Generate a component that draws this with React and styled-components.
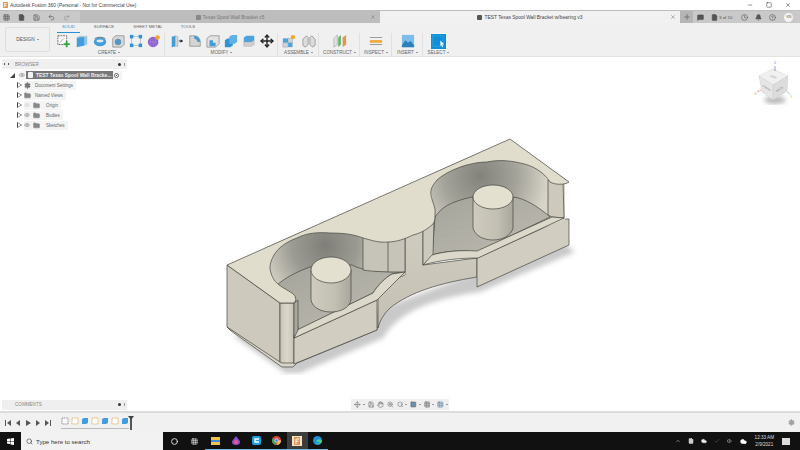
import styled, { createGlobalStyle } from "styled-components"
import {
  Bell, Check, ChevronUp, Circle, Clock, Cloud, Eye, File, Folder, Grid3x3, HelpCircle, Hand, MessageSquare,
  Minus, Move, Plus, Redo2, Save, Search, Settings, Square, Undo2, Volume1, X, ZoomIn,
} from "lucide-react"

const GlobalStyle = createGlobalStyle`
  html, body { margin: 0; padding: 0; background: #fff; }
  body { font-family: "Liberation Sans", Arial, sans-serif; }
`

const Page = styled.div`
  width: 800px;
  height: 450px;
  display: flex;
  flex-direction: column;
  overflow: hidden;
  background: #fff;
  color: #666;
`

const TitleBar = styled.div`
  height: 10px;
  display: flex;
  align-items: center;
  padding: 0 4px 0 3px;
  background: #fff;
`

const AppMark = styled.span`
  width: 5px;
  height: 6px;
  margin-right: 2px;
  background: #e8924a;
  color: #fff;
  font-size: 5px;
  font-weight: 700;
  line-height: 6px;
  text-align: center;
`

const TitleText = styled.span`
  font-size: 4.9px;
  color: #444;
  white-space: nowrap;
`

const WindowButtons = styled.div`
  margin-left: auto;
  display: flex;
  gap: 13px;
  padding-right: 5px;
  color: #333;
`

const TabBar = styled.div`
  height: 13px;
  display: flex;
  background: #c9c9c9;
  border-top: 1px solid #bdbdbd;
  box-sizing: border-box;
`

const QuickTools = styled.div`
  width: 80px;
  display: flex;
  align-items: center;
  gap: 8px;
  padding-left: 3px;
  box-sizing: border-box;
  color: #555;
`

const DocTab = styled.div`
  width: 300px;
  position: relative;
  display: flex;
  align-items: center;
  justify-content: center;
  gap: 2px;
  font-size: 4.9px;
  white-space: nowrap;
  background: ${(p) => (p.$active ? "#f1f1f1" : "#bdbdbd")};
  color: ${(p) => (p.$active ? "#444" : "#777")};
`

const TabCube = styled.span`
  width: 5px;
  height: 5px;
  border-radius: 1px;
  background: ${(p) => (p.$active ? "#555" : "#888")};
`

const TabClose = styled.span`
  position: absolute;
  right: 4px;
  top: 3px;
  display: flex;
  color: #777;
`

const NewTab = styled.div`
  width: 13px;
  display: flex;
  align-items: center;
  justify-content: center;
  background: #b5b5b5;
  color: #777;
`

const AccountTools = styled.div`
  flex: 1;
  display: flex;
  align-items: center;
  padding-left: 4px;
  color: #555;
`

const JobCount = styled.span`
  font-size: 4.4px;
  margin: 0 9px 0 1px;
  color: #555;
  white-space: nowrap;
`

const AccountIcon = styled.span`
  display: flex;
  margin-right: ${(p) => p.$gap}px;
`

const Avatar = styled.span`
  width: 9px;
  height: 9px;
  border-radius: 50%;
  background: #f4f4f4;
  font-size: 3.6px;
  line-height: 9px;
  text-align: center;
  margin-left: 8px;
`

const Toolbar = styled.div`
  height: 34px;
  box-sizing: border-box;
  display: flex;
  padding: 0 0 0 5px;
  background: #f0f0f0;
  border-bottom: 1px solid #e2e2e2;
`

const DesignButton = styled.div`
  width: 45px;
  height: 25px;
  box-sizing: border-box;
  margin: 4px 4px 0 0;
  display: flex;
  align-items: center;
  justify-content: center;
  border: 1px solid #dedede;
  border-radius: 2px;
  font-size: 4.8px;
  color: #555;
`

const Caret = styled.span`
  display: inline-block;
  margin-left: 2px;
  vertical-align: middle;
  border-left: 1.2px solid transparent;
  border-right: 1.2px solid transparent;
  border-top: 1.6px solid #444;
`

const ToolColumn = styled.div`
  display: flex;
  flex-direction: column;
`

const TabRow = styled.div`
  height: 10px;
  display: grid;
  grid-template-columns: 3px 23px 48px 40px 40px;
`

const RibbonTab = styled.div`
  grid-column: ${(p) => p.$col};
  font-size: 4.3px;
  line-height: 8px;
  text-align: center;
  white-space: nowrap;
  color: ${(p) => (p.$active ? "#2a8fd0" : "#666")};
  border-bottom: ${(p) => (p.$active ? "1px solid #2a8fd0" : "none")};
  height: 8.5px;
`

const Groups = styled.div`
  display: flex;
`

const Group = styled.div`
  width: ${(p) => p.$w}px;
  height: 23px;
  margin-right: 1px;
  display: flex;
  flex-direction: column;
  align-items: center;
  border-right: ${(p) => (p.$last ? "none" : "1px solid #e0e0e0")};
  box-sizing: content-box;
`

const GroupIcons = styled.div`
  height: 16px;
  display: flex;
  align-items: center;
  justify-content: center;
  gap: ${(p) => p.$gap || 4}px;
  svg {
    width: ${(p) => p.$size || 14}px;
    height: ${(p) => p.$size || 14}px;
  }
`

const GroupLabel = styled.div`
  font-size: 4.6px;
  line-height: 7px;
  white-space: nowrap;
  color: #666;
`

const Canvas = styled.div`
  position: relative;
  flex: 1;
  min-height: 0;
  display: flex;
  flex-direction: column;
  padding: 2px 0 1px 2px;
  box-sizing: border-box;
  background: #fff;
`

const PanelBar = styled.div`
  width: 125px;
  height: 10px;
  box-sizing: border-box;
  display: flex;
  align-items: center;
  padding: 0 2px;
  background: #efefef;
  font-size: 4.6px;
  color: #888;
`

const Grip = styled.span`
  width: 3px;
  height: 2px;
  margin-right: 6px;
  border-left: 1px solid #555;
  border-right: 1px solid #555;
  visibility: ${(p) => (p.$hidden ? "hidden" : "visible")};
`

const PanelDot = styled.span`
  width: 3px;
  height: 3px;
  margin-left: auto;
  border-radius: 50%;
  background: #333;
`

const PanelPipe = styled.span`
  width: 1px;
  height: 3px;
  margin: 0 0 0 3px;
  background: #999;
`

const Tree = styled.div`
  margin-top: 1px;
  display: flex;
  flex-direction: column;
  z-index: 1;
`

const TreeRow = styled.div`
  height: 10px;
  display: flex;
  align-items: center;
  padding-left: ${(p) => p.$indent}px;
  color: #777;
`

const RowBody = styled.div`
  height: 9px;
  display: flex;
  align-items: center;
  gap: ${(p) => p.$gap || 3}px;
  padding-right: 3px;
  margin-left: 3px;
  background: #f4f4f4;
`

const Arrow = styled.span`
  width: 0;
  height: 0;
  border-left: 4px solid transparent;
  border-top: 2.5px solid transparent;
  border-bottom: 2.5px solid transparent;
  position: relative;
  &::before {
    content: "";
    position: absolute;
    left: -4px;
    top: -3.5px;
    border-left: 5px solid #444;
    border-top: 3.5px solid transparent;
    border-bottom: 3.5px solid transparent;
  }
  &::after {
    content: "";
    position: absolute;
    left: -3.4px;
    top: -2.2px;
    border-left: 3px solid #fff;
    border-top: 2.2px solid transparent;
    border-bottom: 2.2px solid transparent;
  }
`

const RowText = styled.span`
  font-size: 4.5px;
  white-space: nowrap;
  color: #666;
  margin-left: ${(p) => p.$left || 0}px;
`

const RootLabel = styled.span`
  width: 87px;
  height: 8px;
  display: flex;
  align-items: center;
  gap: 3px;
  padding-left: 2px;
  box-sizing: border-box;
  background: #777;
  color: #f2f2f2;
  font-size: 4.9px;
  font-weight: 700;
  white-space: nowrap;
`

const DocChip = styled.span`
  width: 5px;
  height: 6px;
  background: #f2f2f2;
  border-radius: 1px;
`

const RootCorner = styled.span`
  width: 0;
  height: 0;
  margin-right: 1px;
  border-bottom: 5px solid #444;
  border-left: 5px solid transparent;
`

const RadioMark = styled.span`
  width: 5px;
  height: 5px;
  border: 1px solid #666;
  border-radius: 50%;
  box-sizing: border-box;
  background: radial-gradient(circle, #444 40%, #fff 45%);
`

const BottomRow = styled.div`
  margin-top: auto;
  display: flex;
  align-items: center;
  gap: 224px;
`

const NavBar = styled.div`
  width: 98px;
  height: 11px;
  box-sizing: border-box;
  display: flex;
  align-items: center;
  gap: 3px;
  padding: 0 1px 0 3px;
  background: #efefef;
  color: #666;
`

const NavCaret = styled(Caret)`
  margin-left: -1px;
`

const ModelDrawing = styled.svg`
  position: absolute;
  left: 220px;
  top: 73px;
`

const CubeDrawing = styled.svg`
  position: absolute;
  right: 0;
  top: 2px;
`

const Timeline = styled.div`
  height: 21px;
  box-sizing: border-box;
  display: flex;
  align-items: center;
  padding: 0 5px;
  background: #f1f1f1;
  border-top: 2px solid #dcdcdc;
  color: #555;
`

const Transport = styled.div`
  display: flex;
  align-items: center;
  gap: 4px;
  width: 56px;
`

const Steps = styled.div`
  display: flex;
  align-items: center;
  gap: 2px;
  padding-bottom: 3px;
  border-bottom: 1px solid #bbb;
`

const Playhead = styled.span`
  width: 2px;
  height: 14px;
  margin-left: 1px;
  background: #555;
  position: relative;
  &::before {
    content: "";
    position: absolute;
    left: -2px;
    top: 0;
    border-left: 3px solid transparent;
    border-right: 3px solid transparent;
    border-top: 4px solid #444;
  }
`

const TimelineGear = styled.span`
  margin-left: auto;
  display: flex;
  color: #999;
`

const Taskbar = styled.div`
  height: 18px;
  display: flex;
  align-items: center;
  background: #111;
  color: #eee;
`

const StartButton = styled.div`
  width: 21px;
  display: flex;
  justify-content: center;
`

const SearchBox = styled.div`
  width: 142px;
  height: 18px;
  box-sizing: border-box;
  display: flex;
  align-items: center;
  gap: 3px;
  padding-left: 5px;
  margin-right: 1px;
  background: #f2f2f2;
  color: #333;
  font-size: 6.1px;
`

const TaskItem = styled.div`
  width: 20.5px;
  height: 18px;
  box-sizing: border-box;
  display: flex;
  align-items: center;
  justify-content: center;
  background: ${(p) => (p.$current ? "#3d3d3d" : "transparent")};
  border-bottom: ${(p) => (p.$open ? "1px solid #6cb8e8" : "none")};
`

const Tray = styled.div`
  margin-left: auto;
  display: flex;
  align-items: center;
  gap: 7px;
  padding-right: 10px;
  color: #ccc;
`

const TrayClock = styled.div`
  font-size: 4.6px;
  line-height: 7px;
  text-align: center;
  color: #ddd;
  margin-left: 1px;
`

const Notice = styled.span`
  width: 8px;
  height: 7px;
  margin-left: 1px;
  background: #ddd;
`

/* ribbon icons */
const SketchIcon = () => (
  <svg viewBox="0 0 16 16">
    <rect x="1" y="2" width="10" height="10" fill="#fff" stroke="#555" strokeWidth="1" strokeDasharray="2 1" />
    <path d="M3 10 L8 5" stroke="#888" strokeWidth=".8" />
    <path d="M11 8v7M7.5 11.5h7" stroke="#2ca53c" strokeWidth="2" />
  </svg>
)
const BoxIcon = () => (
  <svg viewBox="0 0 16 16">
    <path d="M2 4l9-1v10l-9 2z" fill="#3f9edb" />
    <path d="M11 3l3 -1v10l-3 1z" fill="#8dc6ea" />
    <path d="M2 4l3-2h9l-3 1z" fill="#b9c7d0" />
  </svg>
)
const RevolveIcon = () => (
  <svg viewBox="0 0 16 16">
    <ellipse cx="8" cy="9" rx="7" ry="5" fill="#3f9edb" />
    <ellipse cx="8" cy="8" rx="4" ry="1.6" fill="#e8e8e8" />
    <path d="M1.5 6C3 3 13 3 14.5 6" fill="none" stroke="#555" strokeWidth=".8" />
  </svg>
)
const HoleIcon = () => (
  <svg viewBox="0 0 16 16">
    <path d="M2 5l3-3h10v10l-3 3H2z" fill="#d8d8d8" stroke="#777" strokeWidth=".7" />
    <circle cx="8" cy="9" r="3.4" fill="#4a9bd0" stroke="#777" strokeWidth=".5" />
  </svg>
)
const NodesIcon = () => (
  <svg viewBox="0 0 16 16">
    <rect x="3" y="3" width="10" height="10" fill="none" stroke="#999" strokeWidth=".6" />
    <rect x="1" y="1" width="4" height="4" fill="#2f93d6" />
    <rect x="11" y="1" width="4" height="4" fill="#2f93d6" />
    <rect x="1" y="11" width="4" height="4" fill="#2f93d6" />
    <rect x="11" y="11" width="4" height="4" fill="#2f93d6" />
  </svg>
)
const FormIcon = () => (
  <svg viewBox="0 0 16 16">
    <circle cx="7" cy="9" r="6" fill="#8a5fd0" />
    <path d="M2 9h10M7 3v12M4 4v10M10 4v10" stroke="#b79ae6" strokeWidth=".5" />
    <circle cx="12" cy="4" r="2.6" fill="#f5a623" />
  </svg>
)
const PressIcon = () => (
  <svg viewBox="0 0 16 16">
    <path d="M2 3l4-1v12l-4 1z" fill="#3f9edb" />
    <path d="M6 2l3 1v11l-3 0z" fill="#cfd8de" stroke="#777" strokeWidth=".4" />
    <path d="M10 8h4" stroke="#222" strokeWidth="1" />
    <path d="M12 6l3 2-3 2z" fill="#222" />
  </svg>
)
const FilletIcon = () => (
  <svg viewBox="0 0 16 16">
    <path d="M2 14V2h5a7 7 0 0 1 7 7v5z" fill="#d4d4d4" stroke="#777" strokeWidth=".7" />
    <path d="M7 2a7 7 0 0 1 7 7h-3a5 5 0 0 0-4-4z" fill="#4a9bd0" />
  </svg>
)
const ChamferIcon = () => (
  <svg viewBox="0 0 16 16">
    <path d="M1 5l4-3h10v9l-4 4H1z" fill="#e2e2e2" stroke="#777" strokeWidth=".7" />
    <path d="M4 7l4 0v3h3v4H4z" fill="#3f9edb" />
  </svg>
)
const CombineIcon = () => (
  <svg viewBox="0 0 16 16">
    <path d="M1 7l3-2h6v8l-3 2H1z" fill="#2f93d6" />
    <path d="M6 3l3-2h6v8l-3 2H6z" fill="#5fb0e4" />
  </svg>
)
const StackIcon = () => (
  <svg viewBox="0 0 16 16">
    <path d="M2 4l3-2h9v5l-3 2H2z" fill="#4aa4de" />
    <path d="M2 9h9l3-2v5l-3 2H2z" fill="#cfcfcf" stroke="#999" strokeWidth=".4" />
  </svg>
)
const AssembleIcon = () => (
  <svg viewBox="0 0 16 16">
    <path d="M1 5h6v5H1z" fill="#4aa4de" />
    <path d="M7 5h5v5H7z" fill="#cfd4d8" stroke="#888" strokeWidth=".4" />
    <path d="M1 10h6v5H1z" fill="#cfd4d8" stroke="#888" strokeWidth=".4" />
    <path d="M7 10h5v5H7z" fill="#4aa4de" />
    <circle cx="12.500" cy="3.500" r="2.500" fill="#f5a623" />
  </svg>
)
const JointIcon = () => (
  <svg viewBox="0 0 16 16" fill="#dcdcdc" stroke="#777" strokeWidth=".7">
    <path d="M1 6l4-4 2 2v8l-3 3-3-2z" />
    <path d="M9 4l2-2 4 4v7l-3 2-3-3z" />
  </svg>
)
const ConstructIcon = () => (
  <svg viewBox="0 0 16 16">
    <path d="M1 5l4-4v11l-4 3z" fill="#e2e2e2" stroke="#888" strokeWidth=".5" />
    <path d="M6 4l3-3v11l-3 3z" fill="#5db56a" />
    <path d="M11 4l4-3v11l-4 3z" fill="#e8934f" />
  </svg>
)
const InspectIcon = () => (
  <svg viewBox="0 0 16 16">
    <path d="M1 4h14M1 12h14" stroke="#777" strokeWidth=".8" />
    <rect x="1" y="7" width="14" height="3" fill="#f0a63a" />
  </svg>
)
const InsertIcon = () => (
  <svg viewBox="0 0 16 16">
    <rect x="1" y="1" width="14" height="14" fill="#7dbde8" />
    <path d="M1 13l4-6 3 3 3-2 4 5v2H1z" fill="#2c7fb8" />
  </svg>
)
const SelectIcon = () => (
  <svg viewBox="0 0 18 18">
    <rect x="0" y="0" width="18" height="18" fill="#fff" />
    <rect x="1" y="1" width="16" height="16" fill="#0f8fd6" />
    <rect x="3" y="3" width="11" height="11" fill="none" stroke="#62bdf0" strokeWidth=".6" strokeDasharray="1.5 1" />
    <path d="M11 8l4 4-2 .3 1 2.4-1 .4-1-2.4-1 1.200z" fill="#fff" />
  </svg>
)

/* small timeline glyphs */
const TimelineSketch = ({ color = "#e09a3c" }) => (
  <svg width="8" height="8" viewBox="0 0 8 8">
    <rect x="1" y="1" width="6" height="6" fill="#fff" stroke={color} strokeWidth=".7" strokeDasharray="1.2 .6" />
  </svg>
)
const TimelineBody = () => (
  <svg width="8" height="8" viewBox="0 0 8 8">
    <path d="M1 2l2-1h4v5l-2 1H1z" fill="#3f9edb" />
  </svg>
)
const Transport1 = ({ d }) => (
  <svg width="6" height="6" viewBox="0 0 6 6" fill="#555">
    <path d={d} />
  </svg>
)

const ViewCube = () => (
  <CubeDrawing width="50" height="56" viewBox="750 59 50 56">
    <defs>
      <filter id="cubeShadow"><feGaussianBlur stdDeviation="2" /></filter>
    </defs>
    <ellipse cx="775" cy="100" rx="11" ry="4" fill="#bbb" filter="url(#cubeShadow)" />
    <path d="M773 69l15 7-1 15-14 9-11-8-3-16z" fill="#eee" />
    <path d="M773 69l15 7-15 9-14-9z" fill="#f0f0f0" stroke="#bbb" strokeWidth=".4" strokeDasharray="1.5 .8" />
    <path d="M759 76l14 9v15l-11-8z" fill="#e6e6e6" stroke="#bbb" strokeWidth=".4" strokeDasharray="1.5 .8" />
    <path d="M788 76l-15 9v15l14-9z" fill="#dcdcdc" stroke="#bbb" strokeWidth=".4" strokeDasharray="1.5 .8" />
    <text x="773" y="78" fontSize="2.8" fill="#888" textAnchor="middle" transform="rotate(20 773 78)">LEFT</text>
    <text x="766" y="89" fontSize="2.8" fill="#888" textAnchor="middle" transform="rotate(35 766 89)">FRONT</text>
    <text x="780" y="90" fontSize="2.8" fill="#888" textAnchor="middle" transform="rotate(-32 780 90)">BACK</text>
    <path d="M775 66v5" stroke="#8a7ae0" strokeWidth=".8" />
    <path d="M757 92l4-2" stroke="#e88a6a" strokeWidth=".8" />
    <path d="M787 92l3 2" stroke="#7ed47e" strokeWidth=".8" />
    <text x="775" y="64" fontSize="3.6" fill="#8a7ae0" textAnchor="middle">Z</text>
    <text x="755.5" y="95" fontSize="3.6" fill="#e88a6a" textAnchor="middle">X</text>
    <text x="791" y="98" fontSize="3.6" fill="#7ed47e" textAnchor="middle">Y</text>
  </CubeDrawing>
)

const Model = () => (
  <ModelDrawing width="360" height="245" viewBox="220 130 360 245">
    <defs>
      <clipPath id="bodyClip">
        <path d="M227 265L510 139L569 182V245L477 287V258L405 275L377 300L294 340L280 303Z" />
      </clipPath>
      <filter id="soft" x="-10%" y="-10%" width="120%" height="120%"><feGaussianBlur stdDeviation="2.5" /></filter>
      <radialGradient id="wallL" gradientUnits="userSpaceOnUse" cx="325" cy="246" r="60">
        <stop offset="0" stopColor="#7f7e78" />
        <stop offset=".55" stopColor="#9c9b93" />
        <stop offset="1" stopColor="#cdcbbf" />
      </radialGradient>
      <radialGradient id="wallR" gradientUnits="userSpaceOnUse" cx="480" cy="176" r="68">
        <stop offset="0" stopColor="#82817b" />
        <stop offset=".55" stopColor="#a5a49b" />
        <stop offset="1" stopColor="#d6d3c7" />
      </radialGradient>
      <linearGradient id="cyl" x1="0" x2="1" y1="0" y2="0">
        <stop offset="0" stopColor="#cfccbf" />
        <stop offset=".6" stopColor="#c2bfb3" />
        <stop offset="1" stopColor="#a9a79d" />
      </linearGradient>
      <linearGradient id="floor" x1="0" x2="1" y1="0" y2="1">
        <stop offset="0" stopColor="#a5a49b" />
        <stop offset="1" stopColor="#bebcb1" />
      </linearGradient>
      <linearGradient id="fillet" x1="0" x2="1" y1="0" y2="0">
        <stop offset="0" stopColor="#c8c5b8" />
        <stop offset=".5" stopColor="#dbd8cb" />
        <stop offset="1" stopColor="#c6c3b6" />
      </linearGradient>
      <linearGradient id="flat" x1="0" x2="0" y1="0" y2="1">
        <stop offset="0" stopColor="#d0cdc0" />
        <stop offset="1" stopColor="#c4c1b4" />
      </linearGradient>
    </defs>

    <path d="M232 335 L285 373 L300 373 L383 338 C395 318 420 300 480 292 L575 252 L560 240 L300 340 Z" fill="#c9c9c9" filter="url(#soft)" />

    <g stroke="#45453f" strokeWidth=".7" strokeLinejoin="round">
      <path d="M227 327l4 4 51 36h11l4-4 80-33 0-3-100 30z" fill="#d8d5c8" />
      <path d="M227 265L280 303V362L227 327Z" fill="#cdcabd" />
      <path d="M280 303H294V363H282L280 362Z" fill="url(#fillet)" />
      <path d="M294 338L377 300V330L294 364Z" fill="#d1cec1" />
      <path d="M405 236L423 226V265L477 258V277C440 283 410 292 390 308C384 314 380 320 378 328V299C380 290 385 283 405 275Z" fill="url(#flat)" />
      <path d="M477 258L563 219H569V245L477 287Z" fill="#d1cec1" />

      <path d="M262 228H405V275L392 274C382 280 376 288 373 293L298 330L296 303L262 285Z" fill="url(#wallL)" stroke="none" clipPath="url(#bodyClip)" />
      <path d="M277 285C285 278 296 272 310 267L352 265C362 271 384 272 405 272L392 274C385 278 378 285 373 293L298 330L296 302Z" fill="url(#floor)" />
      <path d="M363 236V270C375 272 390 272 405 272V236Z" fill="#c6c4b8" />
      <path d="M388 240V272" fill="none" />
      <path d="M405 272L378 299L377 300L294 338V335L297 330L373 293C378 285 385 278 392 274Z" fill="#dcd9cb" />
      <path d="M294 303V338L298 330V300Z" fill="#a9a79e" />

      <path d="M425 155H565V220L477 252L432 255V200Z" fill="url(#wallR)" stroke="none" clipPath="url(#bodyClip)" />
      <path d="M435 217C442 207 450 202 472 197L513 197C525 198 540 208 550 217L477 252C462 250 445 251 432 255Z" fill="url(#floor)" />
      <path d="M423 228L434 220L433 255L423 265Z" fill="#cbc9bd" />
      <path d="M548 180H563L564 218L552 217L548 215Z" fill="#cdcabd" />
      <path d="M432 255C445 251 462 250 477 251L552 217L564 218L478 258C460 258 440 260 423 265Z" fill="#dcd9cb" />

      <path d="M227 265L510 139L569 182C565 185 555 185 550 182C544 172 532 165 520 163C508 160 497 160 487 162C470 162 448 170 437 180C432 186 430 190 431 195C432 202 436 208 435 213C435 219 435 222 432 225C425 231 418 234 413 235C405 239 396 242 388 242C378 243 371 240 363 238C353 234 342 233 330 233C318 232 306 233 297 238C286 242 278 248 274 255C270 262 269 268 271 273C273 280 277 284 282 287L292 293C296 296 297 300 294 303H280Z" fill="#e1ddcd" />

      <path d="M311 270V300C314 316 348 316 351 300V270Z" fill="url(#cyl)" />
      <ellipse cx="331" cy="270" rx="20" ry="13" fill="#e4e0d0" />
      <path d="M473 197V228C477 244 509 244 513 228V197Z" fill="url(#cyl)" />
      <ellipse cx="493" cy="197" rx="20" ry="12" fill="#e4e0d0" />
    </g>
  </ModelDrawing>
)

const create = [SketchIcon, BoxIcon, RevolveIcon, HoleIcon, NodesIcon, FormIcon]
const modify = [PressIcon, FilletIcon, ChamferIcon, CombineIcon, StackIcon]

const treeItems = [
  { name: "Document Settings", eye: false, gear: true },
  { name: "Named Views", eye: false },
  { name: "Origin", eye: true, faded: true, nested: true },
  { name: "Bodies", eye: true, nested: true },
  { name: "Sketches", eye: true, nested: true },
]

const App = () => (
  <Page>
    <GlobalStyle />
    <TitleBar>
      <AppMark>F</AppMark>
      <TitleText>Autodesk Fusion 360 (Personal - Not for Commercial Use)</TitleText>
      <WindowButtons>
        <Minus size={6} />
        <Square size={6} />
        <X size={6} />
      </WindowButtons>
    </TitleBar>

    <TabBar>
      <QuickTools>
        <Grid3x3 size={7} />
        <File size={7} fill="#555" />
        <Save size={7} />
        <Undo2 size={7} />
        <Redo2 size={7} opacity={0.5} />
      </QuickTools>
      <DocTab>
        <TabCube />
        Texas Spool Wall Bracket v5
        <TabClose><X size={6} /></TabClose>
      </DocTab>
      <DocTab $active>
        <TabCube $active />
        TEST Texas Spool Wall Bracket w/bearing v3
        <TabClose><X size={6} /></TabClose>
      </DocTab>
      <NewTab><Plus size={8} strokeWidth={3} /></NewTab>
      <AccountTools>
        <AccountIcon $gap={7}><MessageSquare size={7} fill="#555" /></AccountIcon>
        <AccountIcon $gap={0}><File size={7} fill="#555" /></AccountIcon>
        <JobCount>3 of 10</JobCount>
        <AccountIcon $gap={7}><Clock size={7} /></AccountIcon>
        <AccountIcon $gap={7}><Bell size={7} fill="#555" /></AccountIcon>
        <AccountIcon $gap={0}><HelpCircle size={7} /></AccountIcon>
        <Avatar>KN</Avatar>
      </AccountTools>
    </TabBar>

    <Toolbar>
      <DesignButton>DESIGN<Caret /></DesignButton>
      <ToolColumn>
        <TabRow>
          <RibbonTab $col={2} $active>SOLID</RibbonTab>
          <RibbonTab $col={3}>SURFACE</RibbonTab>
          <RibbonTab $col={4}>SHEET METAL</RibbonTab>
          <RibbonTab $col={5}>TOOLS</RibbonTab>
        </TabRow>
        <Groups>
          <Group $w={110}>
            <GroupIcons>{create.map((Icon, i) => <Icon key={i} />)}</GroupIcons>
            <GroupLabel>CREATE<Caret /></GroupLabel>
          </Group>
          <Group $w={111}>
            <GroupIcons>
              {modify.map((Icon, i) => <Icon key={i} />)}
              <Move strokeWidth={2.4} color="#222" />
            </GroupIcons>
            <GroupLabel>MODIFY<Caret /></GroupLabel>
          </Group>
          <Group $w={39}>
            <GroupIcons $gap={6}><AssembleIcon /><JointIcon /></GroupIcons>
            <GroupLabel>ASSEMBLE<Caret /></GroupLabel>
          </Group>
          <Group $w={39}>
            <GroupIcons><ConstructIcon /></GroupIcons>
            <GroupLabel>CONSTRUCT<Caret /></GroupLabel>
          </Group>
          <Group $w={30}>
            <GroupIcons><InspectIcon /></GroupIcons>
            <GroupLabel>INSPECT<Caret /></GroupLabel>
          </Group>
          <Group $w={29}>
            <GroupIcons><InsertIcon /></GroupIcons>
            <GroupLabel>INSERT<Caret /></GroupLabel>
          </Group>
          <Group $w={29} $last>
            <GroupIcons $size={17}><SelectIcon /></GroupIcons>
            <GroupLabel>SELECT<Caret /></GroupLabel>
          </Group>
        </Groups>
      </ToolColumn>
    </Toolbar>

    <Canvas>
      <Model />
      <ViewCube />
      <PanelBar><Grip />BROWSER<PanelDot /><PanelPipe /></PanelBar>
      <Tree>
        <TreeRow $indent={8}>
          <RootCorner />
          <RowBody $gap={1}>
            <Eye size={6} />
            <RootLabel><DocChip />TEST Texas Spool Wall Bracke...</RootLabel>
            <RadioMark />
          </RowBody>
        </TreeRow>
        {treeItems.map((item) => (
          <TreeRow $indent={15} key={item.name}>
            <Arrow />
            <RowBody>
              {item.gear && <Settings size={7} fill="#777" />}
              {item.eye && <Eye size={6} opacity={item.faded ? 0.3 : 1} />}
              {!item.gear && <Folder size={7} fill="#888" stroke="#888" />}
              <RowText $left={item.nested ? 3 : 1}>{item.name}</RowText>
            </RowBody>
          </TreeRow>
        ))}
      </Tree>
      <BottomRow>
        <PanelBar><Grip $hidden />COMMENTS<PanelDot /><PanelPipe /></PanelBar>
        <NavBar>
          <Move size={7} /><NavCaret />
          <Save size={7} />
          <Hand size={7} />
          <ZoomIn size={7} />
          <Search size={7} /><NavCaret />
          <Square size={7} fill="#6b8fb0" /><NavCaret />
          <Grid3x3 size={7} /><NavCaret />
          <Grid3x3 size={7} color="#5a82a8" /><NavCaret />
        </NavBar>
      </BottomRow>
    </Canvas>

    <Timeline>
      <Transport>
        <Transport1 d="M0 0h1v6H0zM6 0v6L2 3z" />
        <Transport1 d="M5 0v6L1 3z" />
        <Transport1 d="M1 0l5 3-5 3z" />
        <Transport1 d="M1 0v6l4-3z" />
        <Transport1 d="M0 0v6l4-3zM5 0h1v6H5z" />
      </Transport>
      <Steps>
        <TimelineSketch color="#666" />
        <TimelineSketch />
        <TimelineBody />
        <TimelineSketch />
        <TimelineBody />
        <TimelineSketch />
        <TimelineBody />
      </Steps>
      <Playhead />
      <TimelineGear><Settings size={7} fill="#aaa" /></TimelineGear>
    </Timeline>

    <Taskbar>
      <StartButton>
        <svg width="7" height="7" viewBox="0 0 7 7" fill="#fff"><path d="M0 1l3-.5V3H0zM3.500.4L7 0v3H3.500zM0 3.500h3V6L0 5.600zM3.500 3.500H7V7l-3.500-.5z" /></svg>
      </StartButton>
      <SearchBox><Search size={7} />Type here to search</SearchBox>
      <TaskItem><Circle size={7} strokeWidth={3} /></TaskItem>
      <TaskItem><Grid3x3 size={7} /></TaskItem>
      <TaskItem $open>
        <svg width="9" height="8" viewBox="0 0 9 8"><rect width="9" height="8" fill="#f2c14e" /><rect y="3" width="9" height="2" fill="#3c8fd6" /></svg>
      </TaskItem>
      <TaskItem $open>
        <svg width="8" height="9" viewBox="0 0 8 9"><path d="M4 0C6 3 8 4 8 6a4 3 0 0 1-8 0C0 4 2 3 4 0z" fill="#8a4fd0" /><circle cx="4" cy="6" r="2" fill="#e85a8a" /></svg>
      </TaskItem>
      <TaskItem $open>
        <svg width="9" height="9" viewBox="0 0 9 9"><rect width="9" height="9" rx="2" fill="#1ba1e2" /><path d="M7 3H3v3h4" fill="none" stroke="#fff" strokeWidth="1.400" /></svg>
      </TaskItem>
      <TaskItem $open>
        <svg width="9" height="9" viewBox="0 0 9 9"><circle cx="4.500" cy="4.500" r="4.500" fill="#d9483b" /><path d="M4.500 9A4.500 4.500 0 0 1 .6 2.200l2.400 3.400z" fill="#3aa757" /><path d="M9 4.500A4.500 4.500 0 0 1 4.500 9L7 4z" fill="#f5c33b" /><circle cx="4.500" cy="4.500" r="1.800" fill="#4285f4" stroke="#fff" strokeWidth=".6" /></svg>
      </TaskItem>
      <TaskItem $open $current>
        <svg width="10" height="10" viewBox="0 0 10 10"><rect width="10" height="10" fill="#f4e3cf" /><rect x="2" y="1" width="6" height="8" fill="#e8924a" /><path d="M4 8V3h3M4 5.200h2.400" fill="none" stroke="#fff" strokeWidth="1" /></svg>
      </TaskItem>
      <TaskItem $open>
        <svg width="9" height="9" viewBox="0 0 9 9"><circle cx="4.500" cy="4.500" r="4.500" fill="#1f8fd6" /><path d="M9 5.500A4.500 4.500 0 0 1 1 6C3 8 6 8 7 6H3.500C3 3 8 2 9 5.500z" fill="#4fd08a" /></svg>
      </TaskItem>
      <Tray>
        <ChevronUp size={6} />
        <File size={6} fill="#ccc" />
        <Cloud size={6} fill="#eee" />
        <Check size={6} opacity={0.5} />
        <Volume1 size={6} />
        <Cloud size={7} fill="#fff" color="#fff" />
        <TrayClock>12:33 AM<br />2/9/2021</TrayClock>
        <Notice />
      </Tray>
    </Taskbar>
  </Page>
)

export default App
